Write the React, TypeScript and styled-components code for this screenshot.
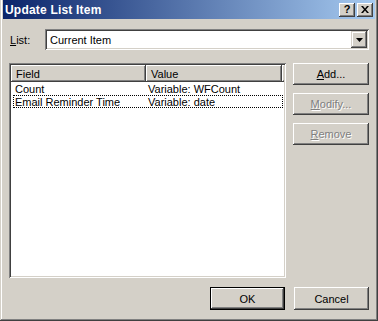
import React from 'react';
import styled, { createGlobalStyle } from 'styled-components';

const GlobalStyle = createGlobalStyle`
  html, body {
    margin: 0;
    padding: 0;
    background: #d4d0c8;
  }
`;

const Window = styled.div`
  width: 378px;
  height: 321px;
  box-sizing: border-box;
  padding: 0 3px 3px 3px;
  background: #d4d0c8;
  box-shadow: inset -1px -1px #404040, inset 1px 0 #d4d0c8, inset -2px -2px #808080,
    inset 2px 0 #ffffff;
  display: flex;
  flex-direction: column;
  font-family: 'Liberation Sans', Arial, sans-serif;
  font-size: 11px;
  color: #000;
`;

const TitleBar = styled.div`
  height: 19px;
  display: flex;
  align-items: center;
  padding: 0 2px 0 2px;
  background: linear-gradient(to right, #0a246a, #a6caf0);
`;

const Title = styled.span`
  flex: 1;
  color: #fff;
  font-weight: bold;
  font-size: 12px;
  letter-spacing: 0.2px;
`;

const CaptionButton = styled.div<{ $gap?: boolean }>`
  width: 16px;
  height: 14px;
  box-sizing: border-box;
  margin-left: ${(p) => (p.$gap ? '2px' : '0')};
  background: #d4d0c8;
  box-shadow: inset -1px -1px #404040, inset 1px 1px #ffffff, inset -2px -2px #808080;
  display: flex;
  align-items: center;
  justify-content: center;
  font-weight: bold;
  font-size: 11px;
  line-height: 1;
`;

const Content = styled.div`
  flex: 1;
  display: flex;
  flex-direction: column;
  padding: 10px 6px 8px 6px;
`;

const ListRow = styled.div`
  display: flex;
  align-items: center;
  height: 21px;
`;

const Label = styled.span`
  width: 35px;
  padding-left: 1px;
`;

const Combo = styled.div`
  flex: 1;
  height: 21px;
  box-sizing: border-box;
  background: #fff;
  box-shadow: inset 1px 1px #808080, inset -1px -1px #ffffff, inset 2px 2px #404040,
    inset -2px -2px #d4d0c8;
  display: flex;
  align-items: center;
  padding: 2px 2px 2px 5px;
`;

const ComboText = styled.span`
  flex: 1;
`;

const ArrowButton = styled.div`
  width: 16px;
  height: 17px;
  box-sizing: border-box;
  background: #d4d0c8;
  box-shadow: inset -1px -1px #404040, inset 1px 1px #d4d0c8, inset -2px -2px #808080,
    inset 2px 2px #ffffff;
  display: flex;
  align-items: center;
  justify-content: center;
`;

const MainRow = styled.div`
  display: flex;
  margin-top: 13px;
  gap: 7px;
`;

const ListView = styled.div`
  width: 277px;
  height: 215px;
  box-sizing: border-box;
  background: #fff;
  padding: 2px;
  box-shadow: inset 1px 1px #808080, inset -1px -1px #ffffff, inset 2px 2px #404040,
    inset -2px -2px #d4d0c8;
`;

const HeaderRow = styled.div`
  display: flex;
  height: 17px;
  background: #d4d0c8;
`;

const HeaderCell = styled.div<{ $w: number }>`
  width: ${(p) => p.$w}px;
  box-sizing: border-box;
  padding-left: 5px;
  display: flex;
  align-items: center;
  box-shadow: inset -1px -1px #404040, inset 1px 1px #ffffff, inset -2px -2px #808080;
`;

const HeaderFill = styled.div`
  flex: 1;
  box-shadow: inset 0 -1px #404040, inset 1px 1px #ffffff, inset 0 -2px #808080;
`;

const Row = styled.div<{ $focused?: boolean }>`
  display: flex;
  height: 13px;
  align-items: center;
  margin: 0 1px 0 2px;
  outline: ${(p) => (p.$focused ? '1px dotted #000' : 'none')};
  outline-offset: -1px;
`;

const Cell = styled.div<{ $w: number }>`
  width: ${(p) => p.$w}px;
  padding-left: 2px;
  box-sizing: border-box;
  white-space: nowrap;
`;

const ButtonColumn = styled.div`
  display: flex;
  flex-direction: column;
  gap: 8px;
`;

const Button = styled.button<{ $default?: boolean; $footer?: boolean }>`
  width: ${(p) => (p.$footer ? '75px' : '76px')};
  height: ${(p) => (p.$footer ? '23px' : '22px')};
  box-sizing: border-box;
  padding: 0;
  background: #d4d0c8;
  border: ${(p) => (p.$default ? '1px solid #000' : 'none')};
  box-shadow: inset -1px -1px #404040, inset 1px 1px #ffffff, inset -2px -2px #808080,
    inset 2px 2px #d4d0c8;
  font-family: 'Liberation Sans', Arial, sans-serif;
  font-size: 11px;
  color: ${(p) => (p.disabled ? '#808080' : '#000')};
  text-shadow: ${(p) => (p.disabled ? '1px 1px #ffffff' : 'none')};
`;

const Footer = styled.div`
  display: flex;
  justify-content: flex-end;
  gap: 9px;
  margin-top: 9px;
`;

const rows = [
  { field: 'Count', value: 'Variable: WFCount' },
  { field: 'Email Reminder Time', value: 'Variable: date' },
];

export default function App() {
  return (
    <>
      <GlobalStyle />
      <Window>
        <TitleBar>
          <Title>Update List Item</Title>
          <CaptionButton>?</CaptionButton>
          <CaptionButton $gap>
            <svg width="8" height="7" viewBox="0 0 8 7">
              <path d="M0 0h2l2 2.5L6 0h2L5 3.5 8 7H6L4 4.5 2 7H0l3-3.5z" fill="#000" />
            </svg>
          </CaptionButton>
        </TitleBar>
        <Content>
          <ListRow>
            <Label>
              <u>L</u>ist:
            </Label>
            <Combo>
              <ComboText>Current Item</ComboText>
              <ArrowButton>
                <svg width="7" height="4" viewBox="0 0 7 4">
                  <path d="M0 0h7L3.5 4z" fill="#000" />
                </svg>
              </ArrowButton>
            </Combo>
          </ListRow>
          <MainRow>
            <ListView>
              <HeaderRow>
                <HeaderCell $w={135}>Field</HeaderCell>
                <HeaderCell $w={136}>Value</HeaderCell>
                <HeaderFill />
              </HeaderRow>
              {rows.map((r, i) => (
                <Row key={r.field} $focused={i === 1}>
                  <Cell $w={133}>{r.field}</Cell>
                  <Cell $w={136}>{r.value}</Cell>
                </Row>
              ))}
            </ListView>
            <ButtonColumn>
              <Button>
                <u>A</u>dd...
              </Button>
              <Button disabled>
                <u>M</u>odify...
              </Button>
              <Button disabled>
                <u>R</u>emove
              </Button>
            </ButtonColumn>
          </MainRow>
          <Footer>
            <Button $default $footer>
              OK
            </Button>
            <Button $footer>Cancel</Button>
          </Footer>
        </Content>
      </Window>
    </>
  );
}
